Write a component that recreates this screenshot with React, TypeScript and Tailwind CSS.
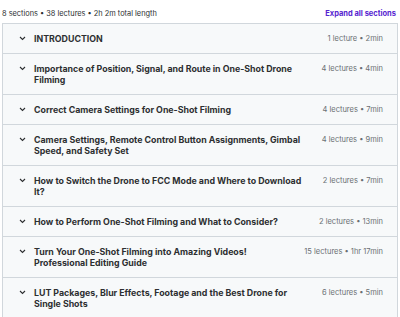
import React from 'react';

const sections = [
  { title: 'INTRODUCTION', meta: '1 lecture • 2min' },
  { title: 'Importance of Position, Signal, and Route in One-Shot Drone Filming', meta: '4 lectures • 4min' },
  { title: 'Correct Camera Settings for One-Shot Filming', meta: '4 lectures • 7min' },
  { title: 'Camera Settings, Remote Control Button Assignments, Gimbal Speed, and Safety Set', meta: '4 lectures • 9min' },
  { title: 'How to Switch the Drone to FCC Mode and Where to Download It?', meta: '2 lectures • 7min' },
  { title: 'How to Perform One-Shot Filming and What to Consider?', meta: '2 lectures • 13min' },
  { title: 'Turn Your One-Shot Filming into Amazing Videos! Professional Editing Guide', meta: '15 lectures • 1hr 17min' },
  { title: 'LUT Packages, Blur Effects, Footage and the Best Drone for Single Shots', meta: '6 lectures • 5min' },
];

const Chevron = () => (
  <svg width="7" height="5" viewBox="0 0 7 5" className="shrink-0 mt-[3px]">
    <path d="M1 1l2.5 2.5L6 1" fill="none" stroke="#2d2f31" strokeWidth="1.1" />
  </svg>
);

export default function App() {
  return (
    <div className="w-[400px] h-[317px] bg-white overflow-hidden px-[2px] pt-[8px]" style={{ fontFamily: 'Inter, "Liberation Sans", sans-serif' }}>
      <div className="flex items-center justify-between h-[11px] mb-[4px]">
        <span className="text-[7.4px] text-[#2d2f31]">8 sections • 38 lectures • 2h 2m total length</span>
        <span className="text-[7.5px] font-bold text-[#5624d0] mr-[2px]">Expand all sections</span>
      </div>
      <div className="border border-[#d1d7dc]">
        {sections.map((s, i) => (
          <div
            key={i}
            className={`flex items-start bg-[#f7f9fa] pl-[16px] pr-[14px] py-[9px] ${i > 0 ? 'border-t border-[#d1d7dc]' : ''}`}
          >
            <Chevron />
            <div className="flex-1 ml-[8px] mr-[21px] text-[8.8px] leading-[11px] font-bold text-[#2d2f31]">{s.title}</div>
            <div className="text-[7.5px] leading-[11px] text-[#6a6f73] whitespace-nowrap">{s.meta}</div>
          </div>
        ))}
      </div>
    </div>
  );
}
